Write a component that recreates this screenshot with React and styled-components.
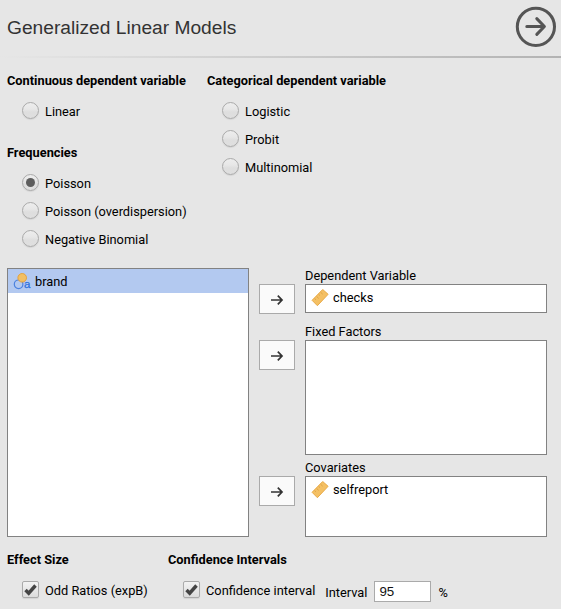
import React from "react";
import styled, { createGlobalStyle } from "styled-components";

const GlobalStyle = createGlobalStyle`
  * { box-sizing: border-box; }
  body { margin: 0; background: #e6e6e6; overflow: hidden; }
`;

const Panel = styled.main`
  width: 561px;
  height: 609px;
  overflow: hidden;
  background: #e6e6e6;
  color: #000;
  font: 12.8px/16px Roboto, sans-serif;
`;

const Header = styled.header`
  display: flex;
  justify-content: space-between;
  height: 56px;
  padding: 6px 4px 0 7px;
`;

const Title = styled.h1`
  margin: 10px 0 0;
  font: 400 19.2px/24px "Liberation Sans", sans-serif;
  color: #333;
`;

const CloseButton = styled.button`
  width: 42px;
  height: 42px;
  padding: 0;
  border: 0;
  background: none;
  svg { display: block; }
`;

const Divider = styled.div`
  height: 2px;
  background: linear-gradient(to right, #e6e6e6, #b3b3b3);
`;

const ModelOptions = styled.section`
  display: grid;
  grid-template-columns: 200px 200px;
  height: 210px;
  padding: 9px 0 0 7px;
`;

const Group = styled.div`
  margin-bottom: 14px;
`;

const Heading = styled.h2`
  margin: 0 0 2px;
  font: 700 12.8px/28px Roboto, sans-serif;
  white-space: nowrap;
`;

const OptionRow = styled.label`
  display: flex;
  align-items: center;
  height: 28px;
  padding-left: 15px;
  gap: 6px;
  white-space: nowrap;
`;

const OptionText = styled.span`
  padding-top: 1px;
`;

const RadioMark = styled.span`
  display: grid;
  place-items: center;
  width: 17px;
  height: 17px;
  margin-bottom: 1px;
  border: 1px solid #aaa;
  border-radius: 50%;
  background: linear-gradient(#ededed 0%, #e7e7e7 40%, #dedede 60%, #dfdfdf);
  box-shadow: 0 1px 1px rgba(0, 0, 0, 0.08);
  &::after {
    content: "";
    width: 9px;
    height: 9px;
    border-radius: 50%;
    background: ${(p) => (p.$checked ? "#5d5d5d" : "transparent")};
  }
`;

const CheckMark = styled.span`
  width: 17px;
  height: 17px;
  margin-bottom: 1px;
  border: 1px solid #aaa;
  border-radius: 2px;
  background: linear-gradient(#f2f2f2, #dcdcdc);
  box-shadow: 0 1px 1px rgba(0, 0, 0, 0.08);
  svg { display: block; }
`;

const Variables = styled.section`
  display: grid;
  grid-template-columns: 242px 36px 242px;
  column-gap: 10px;
  height: 269px;
  padding-left: 7px;
`;

const ListBox = styled.div`
  height: ${(p) => p.$height}px;
  border: 1px solid #828282;
  background: #fff;
`;

const VariableItem = styled.div`
  display: flex;
  align-items: center;
  height: 24px;
  padding: 1px 0 0 5px;
  gap: 4px;
  background: ${(p) => (p.$selected ? "#b3c9f0" : "transparent")};
`;

const Transfers = styled.div`
  display: flex;
  flex-direction: column;
  padding-top: 16px;
`;

const TransferButton = styled.button`
  display: grid;
  place-items: center;
  width: 36px;
  height: 30px;
  padding: 1px 0 0;
  margin-bottom: ${(p) => p.$gap || 0}px;
  border: 1px solid #aaa;
  background: #fafafa;
`;

const Targets = styled.div`
  display: flex;
  flex-direction: column;
`;

const TargetLabel = styled.div`
  height: 16px;
`;

const Target = styled.div`
  margin-bottom: ${(p) => p.$after || 0}px;
`;

const Outputs = styled.section`
  display: grid;
  grid-template-columns: 161px auto;
  padding: 9px 0 0 7px;
`;

const OutputRow = styled.div`
  display: flex;
  height: 28px;
`;

const IntervalField = styled.label`
  display: flex;
  margin: 5px 0 0 10px;
`;

const IntervalText = styled.span`
  padding-top: 4px;
`;

const IntervalInput = styled.input`
  width: 57px;
  height: 21px;
  margin: 0 7px;
  padding: 0 4px;
  border: 1px solid #aaa;
  border-radius: 0;
  background: #fff;
  color: #111;
  font: 13.333px/19px "Liberation Sans", sans-serif;
`;

function Arrow() {
  return (
    <svg width="14" height="12" viewBox="0 0 14 12" fill="none" stroke="#333" strokeWidth="1.7">
      <path d="M1 6H12M7.8 1.7L12 6L7.8 10.3" />
    </svg>
  );
}

function Ruler() {
  return (
    <svg width="18" height="18" viewBox="0 0 18 18">
      <path d="M1.1 11.3L11.7 .5L17.1 5.3L6.4 16.7Z" fill="#f4c064" stroke="#e8aa48" />
      <path d="M3.6 9.5L5 10.8M5.6 7.4L7.7 9.4M7.6 5.3L9 6.6M9.6 3.2L11.7 5.2" stroke="#dda044" strokeWidth=".9" />
    </svg>
  );
}

const NominalMark = styled.svg`
  display: block;
  font: 11.5px "Liberation Sans", sans-serif;
`;

function NominalText() {
  return (
    <NominalMark width="18" height="18" viewBox="0 0 18 18">
      <circle cx="5.6" cy="11.3" r="4.3" fill="none" stroke="#4c82df" strokeWidth="1.2" />
      <circle cx="9.2" cy="4.8" r="4.3" fill="#f2bf62" stroke="#e5a23c" />
      <text x="11" y="15.2" fill="#2d6fdd" stroke="#2d6fdd" strokeWidth=".25">a</text>
    </NominalMark>
  );
}

function Radio({ label, checked }) {
  return (
    <OptionRow>
      <RadioMark $checked={checked} />
      <OptionText>{label}</OptionText>
    </OptionRow>
  );
}

function Checkbox({ label }) {
  return (
    <OptionRow>
      <CheckMark>
        <svg width="15" height="15" viewBox="0 0 15 15">
          <path d="M2.5 8L5.7 11.2L12.5 3.5" fill="none" stroke="#444" strokeWidth="3.4" />
        </svg>
      </CheckMark>
      <OptionText>{label}</OptionText>
    </OptionRow>
  );
}

export default function App() {
  return (
    <Panel>
      <GlobalStyle />
      <Header>
        <Title>Generalized Linear Models</Title>
        <CloseButton aria-label="Hide options">
          <svg width="42" height="42" viewBox="0 0 42 42" fill="none" stroke="#555" strokeWidth="3">
            <circle cx="20.9" cy="20.8" r="18.6" />
            <path d="M11.8 20.5H29M21.8 12.6L29.4 20.5L21.8 28.4" strokeLinecap="round" strokeLinejoin="round" />
          </svg>
        </CloseButton>
      </Header>
      <Divider />
      <ModelOptions>
        <div>
          <Group>
            <Heading>Continuous dependent variable</Heading>
            <Radio label="Linear" />
          </Group>
          <Group>
            <Heading>Frequencies</Heading>
            <Radio label="Poisson" checked />
            <Radio label="Poisson (overdispersion)" />
            <Radio label="Negative Binomial" />
          </Group>
        </div>
        <Group>
          <Heading>Categorical dependent variable</Heading>
          <Radio label="Logistic" />
          <Radio label="Probit" />
          <Radio label="Multinomial" />
        </Group>
      </ModelOptions>
      <Variables>
        <ListBox $height={269}>
          <VariableItem $selected><NominalText />brand</VariableItem>
        </ListBox>
        <Transfers>
          <TransferButton $gap={26} aria-label="Move to dependent variable"><Arrow /></TransferButton>
          <TransferButton $gap={106} aria-label="Move to fixed factors"><Arrow /></TransferButton>
          <TransferButton aria-label="Move to covariates"><Arrow /></TransferButton>
        </Transfers>
        <Targets>
          <Target $after={11}>
            <TargetLabel>Dependent Variable</TargetLabel>
            <ListBox $height={29}><VariableItem><Ruler />checks</VariableItem></ListBox>
          </Target>
          <Target $after={5}>
            <TargetLabel>Fixed Factors</TargetLabel>
            <ListBox $height={115} />
          </Target>
          <Target>
            <TargetLabel>Covariates</TargetLabel>
            <ListBox $height={61}><VariableItem><Ruler />selfreport</VariableItem></ListBox>
          </Target>
        </Targets>
      </Variables>
      <Outputs>
        <div>
          <Heading>Effect Size</Heading>
          <Checkbox label="Odd Ratios (expB)" />
        </div>
        <div>
          <Heading>Confidence Intervals</Heading>
          <OutputRow>
            <Checkbox label="Confidence interval" />
            <IntervalField>
              <IntervalText>Interval</IntervalText>
              <IntervalInput defaultValue="95" />
              <IntervalText>%</IntervalText>
            </IntervalField>
          </OutputRow>
        </div>
      </Outputs>
    </Panel>
  );
}
